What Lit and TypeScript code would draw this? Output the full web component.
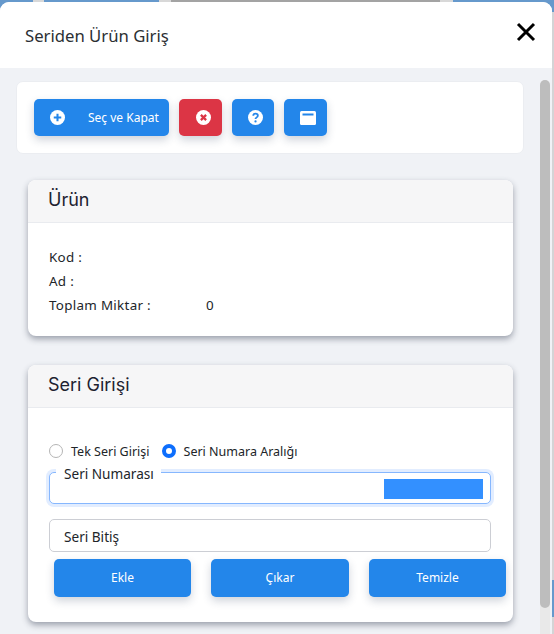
import { LitElement, css, html, svg } from "lit";
import { customElement } from "lit/decorators.js";

const circle = (inner: unknown) => html`<svg class="ic" viewBox="0 0 16 16"><circle cx="8" cy="8" r="8" fill="#fff"></circle>${inner}</svg>`;

@customElement("app-root")
export class AppRoot extends LitElement {
  static styles = css`
    :host {
      display: block;
      width: 554px;
      height: 634px;
      overflow: hidden;
      background: linear-gradient(#6699cc 12px, #d4d4d6 12px, #d4d4d6 580px, #6699cc 580px, #6699cc 617px, #d4d4d6 617px);
      font-family: "Noto Sans", sans-serif;
      color: #212529;
    }
    .strip { display: flex; height: 2px; }
    .strip i { display: block; }
    .blue { background: #6699cc; }
    .light { background: #d8d8d8; }
    .gray { background: #a3a3a3; }
    .modal {
      width: 552px;
      height: 632px;
      background: #f0f2f6;
      border-radius: 9px 9px 0 0;
      overflow: hidden;
      display: flex;
      flex-direction: column;
    }
    .top {
      height: 66px;
      flex: none;
      background: #fff;
      display: flex;
      align-items: center;
      justify-content: space-between;
      padding: 0 16px 0 25px;
      box-sizing: border-box;
    }
    .top h1 { margin: 0; font-size: 16.7px; font-weight: 400; color: #2b2f33; }
    .close { width: 20px; height: 20px; margin-top: -6px; }
    .wrap { flex: 1; display: flex; min-height: 0; }
    .scroll { width: 540px; padding: 13px 0 0 16px; box-sizing: border-box; }
    .bar { width: 10px; margin: 12px 0 0; background: #e9e9e9; border-radius: 5px 5px 0 0; }
    .thumb { height: 528px; background: #bdbdbd; border-radius: 5px; }
    .toolbar {
      width: 508px;
      height: 73px;
      box-sizing: border-box;
      background: #fff;
      border: 1px solid #ebedf1;
      border-radius: 7px;
      padding: 17px 17px;
      display: flex;
      gap: 10px;
    }
    .btn {
      height: 37px;
      border-radius: 5px;
      background: #2386ea;
      color: #fff;
      border: 0;
      padding: 0;
      font: 400 12px "Noto Sans", sans-serif;
      box-shadow: 0 4px 8px rgba(40, 60, 90, 0.22);
      display: flex;
      align-items: center;
      justify-content: center;
    }
    .btn.red { background: #dc3545; }
    .btn.icon { width: 43px; box-sizing: border-box; padding-left: 5px; }
    .btn.narrow { width: 42px; }
    .btn.wide { width: 135px; justify-content: flex-start; padding-left: 16px; box-sizing: border-box; }
    .btn.wide span { margin-left: 23px; }
    .ic { width: 15px; height: 15px; display: block; }
    .win { width: 16px; height: 14px; display: block; }
    .card {
      width: 485px;
      margin: 26px 0 0 12px;
      background: #fff;
      border-radius: 8px;
      box-shadow: 0 3px 6px rgba(50, 60, 80, 0.45);
      overflow: hidden;
    }
    .card + .card { margin-top: 29px; }
    .head {
      height: 43px;
      box-sizing: border-box;
      background: #f6f6f7;
      border-bottom: 1px solid #e9ebef;
      padding: 9px 20px 0;
      font: 400 18px Inter, sans-serif;
      color: #1d2230;
    }
    .info { padding: 22px 21px 19px; font-size: 13.4px; line-height: 24px; }
    .row { display: flex; }
    .row b { font-weight: 400; width: 157px; letter-spacing: 0.3px; }
    .series { padding: 28px 21px 25px; box-sizing: border-box; height: 214px; }
    .radios { display: flex; align-items: center; font-size: 12.5px; height: 30px; margin-bottom: 6px; }
    .radio { width: 14px; height: 14px; border-radius: 50%; border: 1px solid #b5b5b5; box-sizing: border-box; margin-right: 8px; }
    .radio.on { border: 4px solid #0d6efd; margin-left: 12px; }
    .field {
      position: relative;
      width: 442px;
      height: 32px;
      box-sizing: border-box;
      background: #fff;
      border: 1px solid #ccced4;
      border-radius: 5px;
      font-size: 13.6px;
      padding: 8px 14px;
      line-height: 17px;
      margin-bottom: 15px;
    }
    .field.end { height: 33px; margin-bottom: 7px; }
    .field.focus { border-color: #86b7fe; box-shadow: 0 0 0 3px rgba(13, 110, 253, 0.12); }
    .legend {
      position: absolute;
      left: 6px;
      top: -4px;
      background: #fff;
      padding: 0 7px 0 8px;
      line-height: 10px;
      height: 10px;
    }
    .sel { position: absolute; right: 7px; top: 6px; width: 99px; height: 20px; background: #3390ff; }
    .actions { display: grid; grid-template-columns: 137px 138px 137px; column-gap: 20px; margin-left: 5px; }
    .actions .btn { height: 38px; padding-bottom: 2px; box-sizing: border-box; }
  `;

  render() {
    return html`
      <div class="strip">
        <i class="blue" style="width:33px"></i><i class="light" style="width:11px"></i>
        <i class="blue" style="width:115px"></i><i class="light" style="width:12px"></i>
        <i class="gray" style="width:269px"></i><i class="light" style="width:13px"></i>
        <i class="blue" style="width:101px"></i>
      </div>
      <div class="modal">
        <div class="top">
          <h1>Seriden Ürün Giriş</h1>
          <svg class="close" viewBox="0 0 20 20"><path d="M2 2 18 18M18 2 2 18" stroke="#000" stroke-width="3" fill="none"></path></svg>
        </div>
        <div class="wrap">
          <div class="scroll">
            <div class="toolbar">
              <button class="btn wide">
                ${circle(svg`<path d="M8 4v8M4 8h8" stroke="#2386ea" stroke-width="2.2"></path>`)}
                <span>Seç ve Kapat</span>
              </button>
              <button class="btn icon red">
                ${circle(svg`<path d="M5.2 5.2l5.6 5.6M10.8 5.2l-5.6 5.6" stroke="#dc3545" stroke-width="2.4"></path>`)}
              </button>
              <button class="btn icon narrow">
                ${circle(svg`<path d="M5.6 6.2C5.6 4.8 6.7 3.9 8 3.9s2.5.8 2.5 2.1c0 1.9-2.5 1.8-2.5 3.6" stroke="#2386ea" stroke-width="1.9" fill="none"></path><circle cx="8" cy="12.2" r="1.2" fill="#2386ea"></circle>`)}
              </button>
              <button class="btn icon">
                <svg class="win" viewBox="0 0 16 14"><rect width="16" height="14" rx="1.5" fill="#fff"></rect><rect x="2.5" y="2.5" width="11" height="2" fill="#2386ea"></rect></svg>
              </button>
            </div>
            <div class="card">
              <div class="head">Ürün</div>
              <div class="info">
                <div class="row"><b>Kod :</b></div>
                <div class="row"><b>Ad :</b></div>
                <div class="row"><b>Toplam Miktar :</b><span>0</span></div>
              </div>
            </div>
            <div class="card">
              <div class="head">Seri Girişi</div>
              <div class="series">
                <div class="radios">
                  <span class="radio"></span>Tek Seri Girişi
                  <span class="radio on"></span>Seri Numara Aralığı
                </div>
                <div class="field focus"><span class="legend">Seri Numarası</span><span class="sel"></span></div>
                <div class="field end">Seri Bitiş</div>
                <div class="actions">
                  <button class="btn">Ekle</button>
                  <button class="btn">Çıkar</button>
                  <button class="btn">Temizle</button>
                </div>
              </div>
            </div>
          </div>
          <div class="bar"><div class="thumb"></div></div>
        </div>
      </div>
    `;
  }
}
